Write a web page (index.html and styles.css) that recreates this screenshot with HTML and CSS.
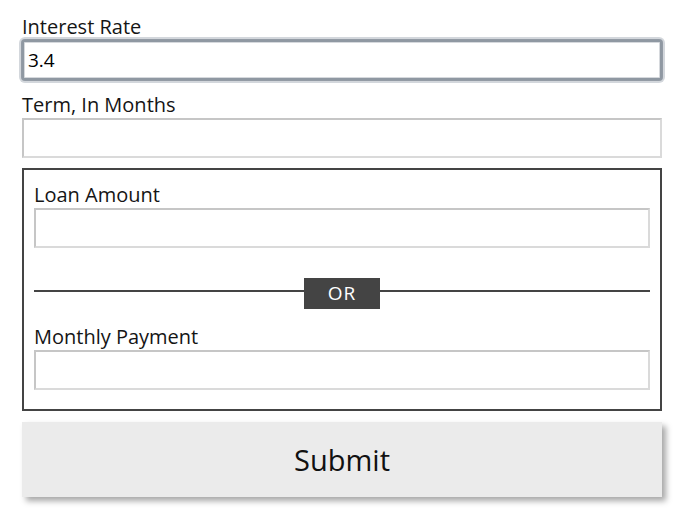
FILE: index.html
```html
<!DOCTYPE html>
<html>
<head>
<meta charset="utf-8">
<link rel="stylesheet" href="styles.css">
</head>
<body>
<form class="form">
  <label class="label" for="rate">Interest Rate</label>
  <input class="input input-focus" id="rate" type="text" value="3.4">
  <label class="label" for="term">Term, In Months</label>
  <input class="input input-last" id="term" type="text">
  <div class="group">
    <label class="label" for="amount">Loan Amount</label>
    <input class="input input-group" id="amount" type="text">
    <div class="divider">
      <span class="line"></span>
      <span class="or">OR</span>
      <span class="line"></span>
    </div>
    <label class="label" for="payment">Monthly Payment</label>
    <input class="input input-group" id="payment" type="text">
  </div>
  <button class="submit" type="button">Submit</button>
</form>
</body>
</html>
```
FILE: styles.css
```css
html, body {
  margin: 0;
  padding: 0;
  background: #ffffff;
}
.form {
  width: 640px;
  padding: 14px 0 20px 22px;
  font-family: "Open Sans", "Noto Sans", sans-serif;
  color: #151515;
}
.label {
  display: block;
  font-size: 20px;
  line-height: 26px;
  height: 26px;
  white-space: nowrap;
}
.input {
  display: block;
  box-sizing: border-box;
  width: 100%;
  height: 40px;
  margin: 0 0 12px 0;
  padding: 0 4px;
  font-family: "Open Sans", "Noto Sans", sans-serif;
  font-size: 19px;
  color: #000;
  background: #fff;
  border: 2px solid;
  border-color: #c6c6c6 #dadada #dadada #c6c6c6;
  border-radius: 0;
  outline: none;
}
.input-focus {
  border-color: #8f98a2;
  border-radius: 3px;
  box-shadow: 0 0 0 1px #939ba5, 0 0 0 3px #d3d7dc, inset 0 0 0 1px #d6d9dd;
}
.input-last {
  margin-bottom: 10px;
}
.input-group {
  margin-bottom: 0;
}
.group {
  border: 2px solid #444;
  padding: 12px 10px 19px 10px;
}
.divider {
  display: flex;
  margin: 30px 0 15px 0;
  height: 31px;
}
.line {
  flex: 1;
  height: 2px;
  margin-top: 12px;
  background: #444;
}
.or {
  width: 76px;
  height: 31px;
  background: #444;
  color: #fff;
  font-size: 19px;
  line-height: 31px;
  text-align: center;
  letter-spacing: 1px;
}
.submit {
  display: block;
  box-sizing: border-box;
  width: 100%;
  height: 75px;
  margin-top: 11px;
  border: none;
  background: #ebebeb;
  font-family: "Open Sans", "Noto Sans", sans-serif;
  font-size: 29px;
  color: #111;
  box-shadow: 4px 4px 6px rgba(0, 0, 0, 0.35);
  cursor: pointer;
}
```
